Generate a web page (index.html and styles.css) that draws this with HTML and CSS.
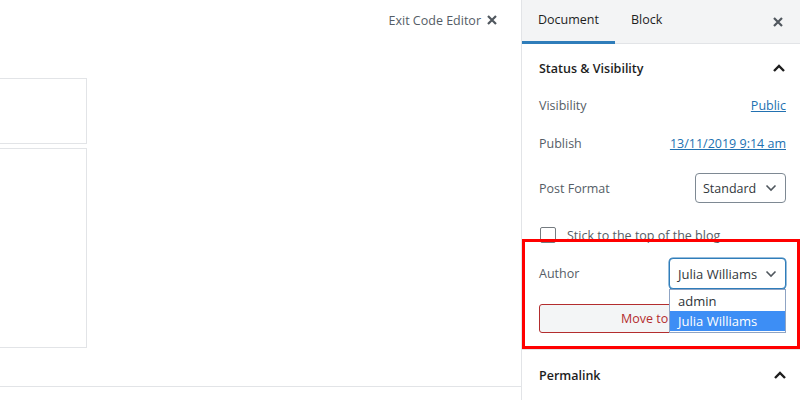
FILE: index.html
```html
<!DOCTYPE html>
<html>
<head>
<meta charset="utf-8">
<link rel="stylesheet" href="styles.css">
</head>
<body>
<div class="app">
  <div class="main">
    <div class="main-toolbar">
      <span class="exit-text">Exit Code Editor</span>
      <svg class="exit-x" width="12" height="12" viewBox="0 0 12 12"><path d="M2 2 L10 10 M10 2 L2 10" stroke="#50575e" stroke-width="2.2" fill="none"/></svg>
    </div>
    <div class="canvas">
      <div class="box box-title"></div>
      <div class="box box-content"></div>
      <div class="canvas-rule"></div>
    </div>
  </div>
  <div class="sidebar">
    <div class="side-header">
      <div class="tab tab-active">Document</div>
      <div class="tab">Block</div>
      <div class="spacer"></div>
      <svg class="close-x" width="12" height="12" viewBox="0 0 12 12"><path d="M2 2 L10 10 M10 2 L2 10" stroke="#50575e" stroke-width="2.2" fill="none"/></svg>
    </div>
    <div class="panel">
      <div class="panel-head">
        <span class="panel-title">Status &amp; Visibility</span>
        <svg class="chev" width="14" height="10" viewBox="0 0 14 10"><path d="M2 8 L7 3 L12 8" stroke="#1e1e1e" stroke-width="2.4" fill="none"/></svg>
      </div>
      <div class="row row-vis"><span class="label">Visibility</span><a class="link">Public</a></div>
      <div class="row row-pub"><span class="label">Publish</span><a class="link">13/11/2019 9:14 am</a></div>
      <div class="row row-fmt"><span class="label">Post Format</span>
        <div class="select select-fmt"><span>Standard</span><svg width="12" height="8" viewBox="0 0 12 8"><path d="M1.5 1.5 L6 6 L10.5 1.5" stroke="#50575e" stroke-width="1.6" fill="none"/></svg></div>
      </div>
      <div class="row row-chk"><span class="checkbox"></span><span class="label chk-label">Stick to the top of the blog</span></div>
      <div class="row row-author"><span class="label">Author</span>
        <div class="select select-author"><span>Julia Williams</span><svg width="12" height="8" viewBox="0 0 12 8"><path d="M1.5 1.5 L6 6 L10.5 1.5" stroke="#50575e" stroke-width="1.6" fill="none"/></svg>
          <div class="dropdown">
            <div class="opt">admin</div>
            <div class="opt opt-sel">Julia Williams</div>
          </div>
        </div>
      </div>
      <div class="row row-trash"><div class="trash">Move to Trash</div></div>
      <div class="highlight"></div>
    </div>
    <div class="panel-head panel-perma">
      <span class="panel-title">Permalink</span>
      <svg class="chev" width="14" height="10" viewBox="0 0 14 10"><path d="M2 8 L7 3 L12 8" stroke="#1e1e1e" stroke-width="2.4" fill="none"/></svg>
    </div>
  </div>
</div>
</body>
</html>
```
FILE: styles.css
```css
* { box-sizing: border-box; }
html, body { margin: 0; padding: 0; }
body {
  font-family: "Open Sans", "Noto Sans", sans-serif;
  font-size: 12.5px;
  color: #1e1e1e;
  background: #fff;
}
.app { display: flex; width: 800px; height: 400px; overflow: hidden; }
.main { width: 521px; flex: none; display: flex; flex-direction: column; }
.main-toolbar {
  height: 40px; display: flex; align-items: center; justify-content: flex-end;
  padding-right: 23px; gap: 5px;
}
.exit-text { color: #555d66; font-size: 12.5px; }
.exit-x { margin-top: -1px; }
.canvas { display: flex; flex-direction: column; }
.box { border: 1px solid #e2e4e7; width: 88px; margin-left: -1px; }
.box-title { margin-top: 38px; height: 66px; }
.box-content { margin-top: 4px; height: 200px; }
.canvas-rule { margin-top: 38px; border-top: 1px solid #e2e4e7; width: 521px; }

.sidebar { width: 279px; flex: none; border-left: 1px solid #e2e4e7; position: relative; }
.side-header {
  height: 44px; background: #f3f4f5; border-bottom: 1px solid #e2e4e7;
  display: flex; align-items: stretch; padding-right: 16px;
}
.tab {
  display: flex; align-items: center; padding: 0 15px 2px 16px; color: #1e1e1e;
  font-size: 12.5px; border-bottom: 3px solid transparent; margin-bottom: -1px;
}
.tab-active { border-bottom-color: #2f7dba; width: 93px; padding-left: 16px; }
.spacer { flex: 1; }
.close-x { align-self: center; }

.panel { position: relative; padding: 0 14px 16px 17px; border-bottom: 1px solid #e2e4e7; height: 306px; }
.panel-head { height: 48px; display: flex; align-items: center; justify-content: space-between; }
.panel-title { font-weight: 600; font-size: 12.5px; color: #1e1e1e; }
.panel-perma { padding: 0 13px 0 17px; height: 50px; }
.row { display: flex; align-items: center; justify-content: space-between; }
.label { color: #555d66; }
.link { color: #2271b1; text-decoration: underline; }
.row-vis { height: 26px; }
.row-pub { height: 26px; margin-top: 12px; }
.row-fmt { height: 30px; margin-top: 17px; }
.row-chk { height: 26px; margin-top: 19px; justify-content: flex-start; }
.row-author { height: 31px; margin-top: 10px; }
.row-trash { height: 29px; margin-top: 15px; }
.select {
  height: 100%; border: 1px solid #7e8993; border-radius: 4px;
  display: flex; align-items: center; justify-content: space-between;
  padding: 0 8px 0 7px; color: #32373c; background: #fff;
}
.select-fmt { width: 91px; }
.select-author { width: 117px; border-color: #2f7dba; box-shadow: 0 0 0 0.5px #2f7dba; position: relative; padding-left: 8px; font-size: 13px; }
.checkbox {
  width: 16px; height: 16px; border: 1.5px solid #757b80; border-radius: 2px; flex: none; margin-left: 1px;
}
.chk-label { margin-left: 11px; }
.dropdown {
  position: absolute; left: -1px; top: 30px; width: 117px; background: #fff;
  border: 1px solid #8fa4c4; z-index: 3; padding: 1px 0 1px;
}
.opt { height: 20px; display: flex; align-items: center; padding-left: 8px; color: #2c3338; font-size: 13px; }
.opt-sel { background: #3d8ef5; color: #fff; }
.trash {
  width: 100%; height: 100%; border: 1px solid #b32d2e; border-radius: 3px; background: #f3f5f6;
  color: #b32d2e; display: flex; align-items: center; justify-content: center;
}
.highlight {
  position: absolute; left: 0; top: 195px; width: 278px; height: 110px;
  border: 3px solid #ff0000; pointer-events: none; z-index: 2;
}
```
